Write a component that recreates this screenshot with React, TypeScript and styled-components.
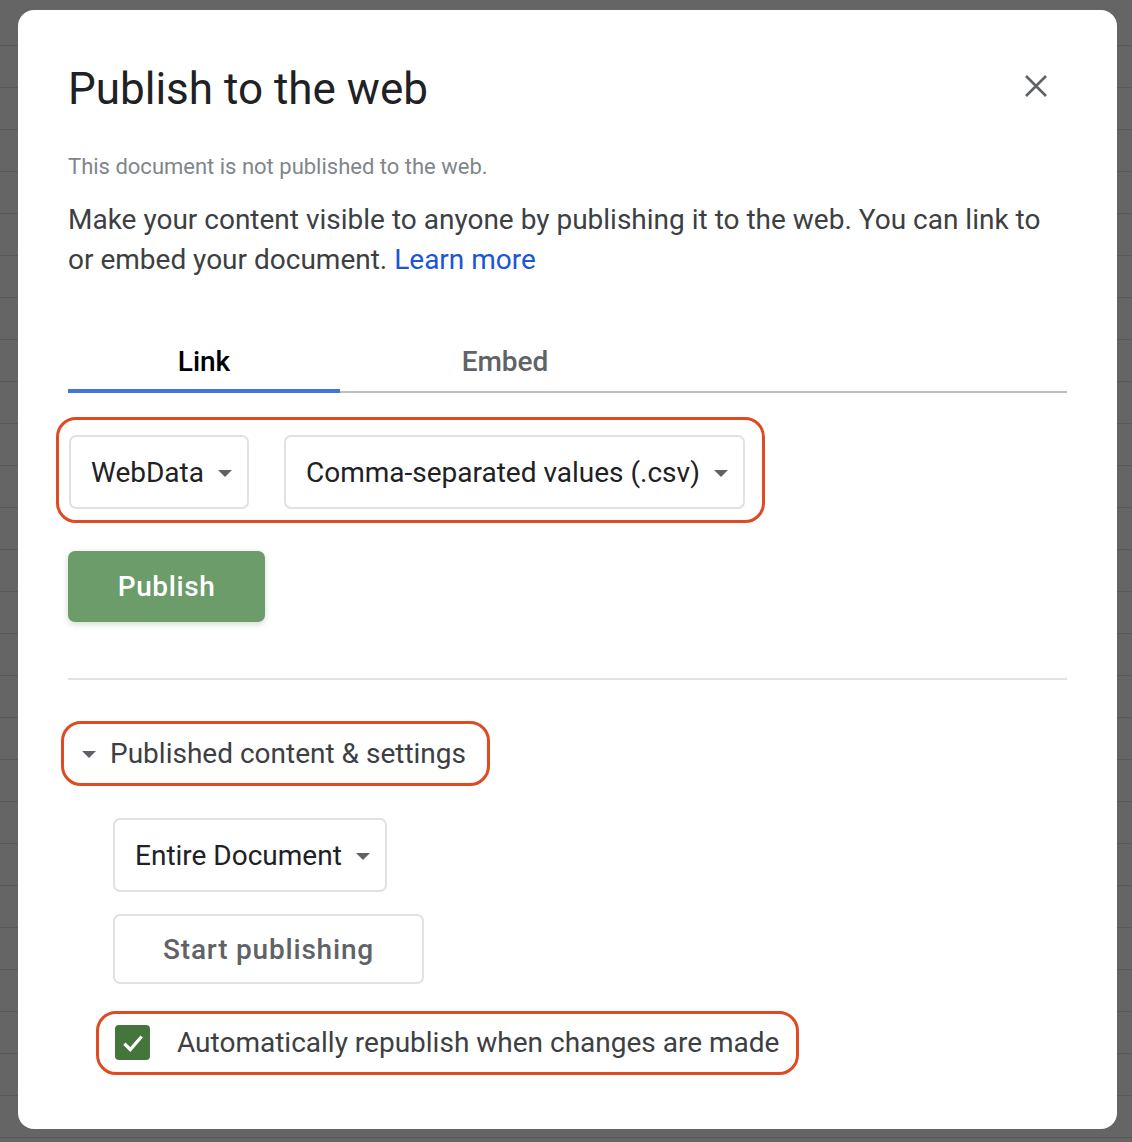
import React from "react";
import styled, { createGlobalStyle } from "styled-components";

const Global = createGlobalStyle`
  html, body {
    margin: 0;
    padding: 0;
  }
  body {
    width: 1132px;
    height: 1142px;
    overflow: hidden;
    background-color: #646564;
    background-image: repeating-linear-gradient(
      to bottom,
      transparent 0,
      transparent 41px,
      #585958 41px,
      #585958 42px
    );
    background-position: 0 4px;
    font-family: Roboto, "Liberation Sans", Arial, sans-serif;
  }
`;

const Dialog = styled.div`
  box-sizing: border-box;
  margin: 10px 0 0 18px;
  width: 1099px;
  height: 1119px;
  background: #fff;
  border-radius: 16px;
  padding: 53px 50px 0 50px;
  display: flex;
  flex-direction: column;
  align-items: flex-start;
`;

const Header = styled.div`
  align-self: stretch;
  display: flex;
  align-items: center;
  justify-content: space-between;
`;

const Title = styled.h1`
  margin: 0;
  font-family: Roboto, "Liberation Sans", sans-serif;
  font-weight: 400;
  font-size: 44px;
  line-height: 52px;
  color: #202124;
`;

const CloseButton = styled.button`
  width: 40px;
  height: 40px;
  margin: -6px 11px 0 0;
  padding: 0;
  border: none;
  background: none;
  display: flex;
  align-items: center;
  justify-content: center;
`;

const Status = styled.p`
  margin: 38px 0 0;
  font-size: 22px;
  line-height: 28px;
  color: #80868b;
`;

const Intro = styled.p`
  margin: 19px 0 0;
  font-size: 28px;
  line-height: 40px;
  color: #3c4043;
  a {
    color: #1a56d6;
    text-decoration: none;
  }
`;

const Tabs = styled.div`
  align-self: stretch;
  display: flex;
  margin-top: 50px;
  border-bottom: 2px solid #bdbdbd;
`;

const Tab = styled.div<{ $active?: boolean; $width: number }>`
  width: ${(p) => p.$width}px;
  height: 63px;
  margin-bottom: -2px;
  display: flex;
  align-items: center;
  justify-content: center;
  box-sizing: border-box;
  font-size: 28px;
  font-weight: 500;
  color: ${(p) => (p.$active ? "#000" : "#5f6368")};
  border-bottom: 4px solid ${(p) => (p.$active ? "#4274e0" : "transparent")};
  padding-top: 3px;
`;

const Highlight = styled.div<{ $pad: string; $shift: number; $top: number }>`
  display: inline-flex;
  align-items: center;
  border: 3px solid #e04a22;
  border-radius: 20px;
  padding: ${(p) => p.$pad};
  margin-left: ${(p) => p.$shift}px;
  margin-top: ${(p) => p.$top}px;
`;

const SelectRow = styled.div`
  display: flex;
  gap: 35px;
`;

const Select = styled.div`
  box-sizing: border-box;
  height: 74px;
  display: inline-flex;
  align-items: center;
  gap: 14px;
  padding: 0 15px 0 20px;
  border: 2px solid #dfe1e5;
  border-radius: 7px;
  font-size: 28px;
  color: #202124;
  background: #fff;
`;

const Caret = styled.span`
  width: 0;
  height: 0;
  border-left: 7px solid transparent;
  border-right: 7px solid transparent;
  border-top: 7px solid #5f6368;
  margin-top: 2px;
`;

const PublishButton = styled.button`
  margin-top: 28px;
  width: 197px;
  height: 71px;
  border: none;
  border-radius: 7px;
  background: #6b9c6a;
  color: #fff;
  font-family: Roboto, "Liberation Sans", sans-serif;
  font-size: 28px;
  font-weight: 500;
  letter-spacing: 0.6px;
  box-shadow: 0 2px 6px rgba(107, 156, 106, 0.35);
`;

const Divider = styled.hr`
  align-self: stretch;
  margin: 56px 0 0;
  border: none;
  border-top: 2px solid #dfe1e5;
`;

const SectionToggle = styled.span`
  display: inline-flex;
  align-items: center;
  gap: 14px;
  font-size: 28px;
  color: #3c4043;
`;

const Settings = styled.div`
  margin-left: 45px;
  display: flex;
  flex-direction: column;
  align-items: flex-start;
  gap: 22px;
  margin-top: 32px;
`;

const OutlineButton = styled.button`
  box-sizing: border-box;
  width: 311px;
  height: 70px;
  border: 2px solid #dfe1e5;
  border-radius: 7px;
  background: #fff;
  color: #5f6368;
  font-family: Roboto, "Liberation Sans", sans-serif;
  font-size: 28px;
  font-weight: 500;
  letter-spacing: 0.8px;
`;

const CheckRow = styled.label`
  display: inline-flex;
  align-items: center;
  gap: 27px;
  font-size: 28px;
  color: #3c4043;
`;

const CheckBox = styled.span`
  width: 35px;
  height: 35px;
  border-radius: 4px;
  background: #44763c;
  display: flex;
  align-items: center;
  justify-content: center;
`;

export default function App() {
  return (
    <>
      <Global />
      <Dialog>
        <Header>
          <Title>Publish to the web</Title>
          <CloseButton aria-label="Close">
            <svg width="24" height="24" viewBox="0 0 24 24">
              <path
                d="M2 2 L22 22 M22 2 L2 22"
                stroke="#5f6368"
                strokeWidth="2.6"
                fill="none"
              />
            </svg>
          </CloseButton>
        </Header>
        <Status>This document is not published to the web.</Status>
        <Intro>
          Make your content visible to anyone by publishing it to the web. You can link to
          <br />
          or embed your document. <a href="#">Learn more</a>
        </Intro>
        <Tabs>
          <Tab $active $width={272}>
            Link
          </Tab>
          <Tab $width={330}>Embed</Tab>
        </Tabs>
        <Highlight $pad="15px 17px 11px 10px" $shift={-12} $top={24}>
          <SelectRow>
            <Select>
              WebData <Caret />
            </Select>
            <Select>
              Comma-separated values (.csv) <Caret />
            </Select>
          </SelectRow>
        </Highlight>
        <PublishButton>Publish</PublishButton>
        <Divider />
        <Highlight $pad="13px 21px 13px 18px" $shift={-7} $top={41}>
          <SectionToggle>
            <Caret />
            Published content &amp; settings
          </SectionToggle>
        </Highlight>
        <Settings>
          <Select>
            Entire Document <Caret />
          </Select>
          <OutlineButton>Start publishing</OutlineButton>
        </Settings>
        <Highlight $pad="11px 17px 12px 16px" $shift={28} $top={27}>
          <CheckRow>
            <CheckBox>
              <svg width="26" height="26" viewBox="0 0 24 24">
                <path
                  d="M4 12.5 L9.5 18 L20 6"
                  stroke="#fff"
                  strokeWidth="3"
                  fill="none"
                />
              </svg>
            </CheckBox>
            Automatically republish when changes are made
          </CheckRow>
        </Highlight>
      </Dialog>
    </>
  );
}
